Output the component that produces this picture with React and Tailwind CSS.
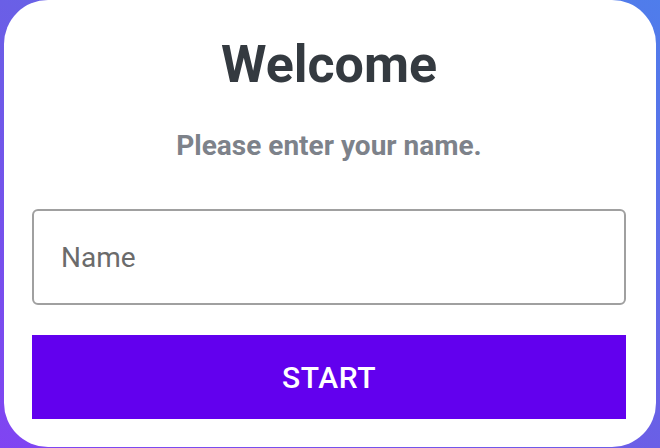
export default function App() {
  return (
    <div className="h-[448px] w-[660px] overflow-hidden bg-[linear-gradient(to_bottom_left,#4f7deb,#6a5fe6_50%,#8044f2)] px-[4px] font-['Roboto',sans-serif]">
      <div className="flex h-[447px] flex-col rounded-[44px] bg-white pr-[30px] pl-[28px]">
        <h1 className="mt-[34px] text-center text-[52px] leading-[62px] font-bold text-[#343a40]">
          Welcome
        </h1>
        <p className="mt-[33px] text-center text-[28px] leading-[34px] font-bold text-[#7d828a]">
          Please enter your name.
        </p>
        <input
          type="text"
          placeholder="Name"
          className="mt-[46px] h-[96px] w-full rounded-[6px] border-2 border-[#a0a0a0] px-[27px] text-[28px] text-[#333] outline-none placeholder:text-[#6b6b6b]"
        />
        <button className="mt-[30px] h-[84px] w-full bg-[#6200ee] text-[30px] font-medium tracking-[0.02em] text-white">
          START
        </button>
      </div>
    </div>
  );
}
